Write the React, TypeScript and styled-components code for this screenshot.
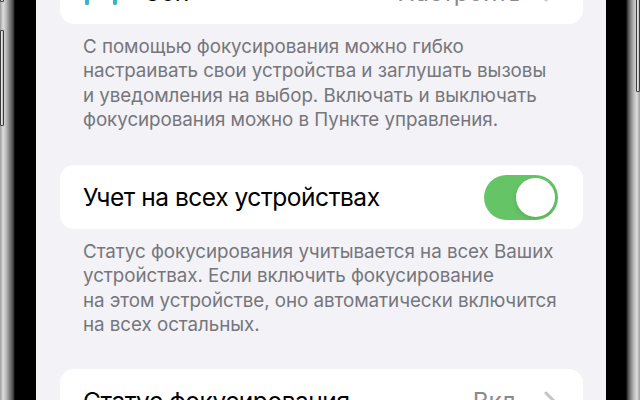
import styled, { createGlobalStyle } from 'styled-components'

const GlobalStyle = createGlobalStyle`
    html, body {
        margin: 0;
        padding: 0;
        width: 640px;
        height: 400px;
        overflow: hidden;
        background: #000;
    }
    * {
        box-sizing: border-box;
    }
`

// * phone frame
const Phone = styled.div`
    display: flex;
    width: 640px;
    height: 400px;
    overflow: hidden;
    font-family: Inter, "Noto Sans", "DejaVu Sans", sans-serif;
`

const Bezel = styled.div<{ $side: 'left' | 'right' }>`
    position: relative;
    flex: 0 0 ${props => props.$side === 'left' ? '36px' : '34px'};
    height: 100%;
    background: ${props => props.$side === 'left'
        ? 'linear-gradient(to right, #9a9a9a 0px, #dcdcdc 3px, #bdbdbd 6px, #8a8a8a 9px, #4a4a4a 13px, #000 15px, #000 100%)'
        : 'linear-gradient(to left, #9a9a9a 0px, #dcdcdc 3px, #bdbdbd 6px, #8a8a8a 9px, #4a4a4a 12px, #000 14px, #000 100%)'};
`

// side buttons sit on top of the frame
const SideButton = styled.span<{ $side: 'left' | 'right', $top: number, $h: number }>`
    position: absolute;
    top: ${props => props.$top}px;
    ${props => props.$side === 'left' ? 'left: 0;' : 'right: 0;'}
    width: 4px;
    height: ${props => props.$h}px;
    background: linear-gradient(to right, #f2f2f2, #b8b8b8);
    border: 1px solid #3a3a3a;
    border-radius: 1px;
`

const Screen = styled.div`
    flex: 1;
    height: 100%;
    background: #f2f2f7;
    overflow: hidden;
`

const Scroll = styled.div`
    display: flex;
    flex-direction: column;
    margin-top: -40px;
    padding: 0 23px 0 24px;
`

const Card = styled.div<{ $gap?: number }>`
    margin-top: ${props => props.$gap ?? 0}px;
    background: #fff;
    border-radius: 14px;
`

const Row = styled.div`
    display: flex;
    align-items: center;
    height: 64px;
    padding: 0 27px 0 23px;
`

const IconBox = styled.span`
    display: flex;
    width: 36px;
    margin-right: 24px;
    color: #3ab3c9;
`

const Title = styled.span`
    flex: 1;
    font-size: 24.5px;
    color: #000;
    letter-spacing: -0.45px;
    white-space: nowrap;
`

const Value = styled.span`
    font-size: 24.5px;
    color: #8a8a8e;
    margin-right: 22px;
    letter-spacing: -0.3px;
`

const Footer = styled.p`
    margin: 11px 0 0;
    padding: 0 23px;
    font-size: 18.8px;
    line-height: 24.3px;
    color: #76767b;
    letter-spacing: -0.05px;
`

const Toggle = styled.span<{ $on: boolean }>`
    display: flex;
    justify-content: ${props => props.$on ? 'flex-end' : 'flex-start'};
    align-items: center;
    width: 74px;
    height: 45px;
    padding: 3px;
    margin-right: -2px;
    border-radius: 23px;
    background: ${props => props.$on ? '#65c466' : '#e9e9ea'};
`

const Knob = styled.span`
    width: 39px;
    height: 39px;
    border-radius: 50%;
    background: #fff;
    box-shadow: 0 2px 5px rgba(0, 0, 0, 0.12);
`

const Chevron = () => (
    <svg width="12" height="20" viewBox="0 0 12 20">
        <path d="M2 2 L10 10 L2 18" fill="none" stroke="#c4c4c7" strokeWidth="3" strokeLinecap="round" strokeLinejoin="round" />
    </svg>
)

const BedIcon = () => (
    <svg width="36" height="26" viewBox="0 0 36 26" fill="currentColor">
        <rect x="2" y="2" width="4" height="24" rx="1.5" />
        <rect x="30" y="12" width="4" height="14" rx="1.5" />
        <rect x="2" y="14" width="32" height="6" rx="2" />
        <rect x="14" y="6" width="20" height="7" rx="3" />
        <circle cx="10" cy="9" r="3.5" />
    </svg>
)

const App = () => {
    return <Phone>
        <GlobalStyle />
        <Bezel $side="left">
            <SideButton $side="left" $top={-4} $h={6} />
            <SideButton $side="left" $top={30} $h={96} />
        </Bezel>
        <Screen>
            <Scroll>
                <Card>
                    <Row>
                        <IconBox><BedIcon /></IconBox>
                        <Title>Сон</Title>
                        <Value>Настроить</Value>
                        <Chevron />
                    </Row>
                </Card>
                <Footer>
                    С помощью фокусирования можно гибко настраивать свои устройства и заглушать вызовы и уведомления на выбор. Включать и выключать фокусирования можно в Пункте управления.
                </Footer>
                <Card $gap={33}>
                    <Row>
                        <Title>Учет на всех устройствах</Title>
                        <Toggle $on={true}><Knob /></Toggle>
                    </Row>
                </Card>
                <Footer>
                    Статус фокусирования учитывается на всех Ваших устройствах. Если включить фокусирование<br />
                    на этом устройстве, оно автоматически включится на всех остальных.
                </Footer>
                <Card $gap={32}>
                    <Row>
                        <Title>Статус фокусирования</Title>
                        <Value>Вкл.</Value>
                        <Chevron />
                    </Row>
                </Card>
            </Scroll>
        </Screen>
        <Bezel $side="right">
            <SideButton $side="right" $top={-4} $h={96} />
        </Bezel>
    </Phone>
}

export default App
